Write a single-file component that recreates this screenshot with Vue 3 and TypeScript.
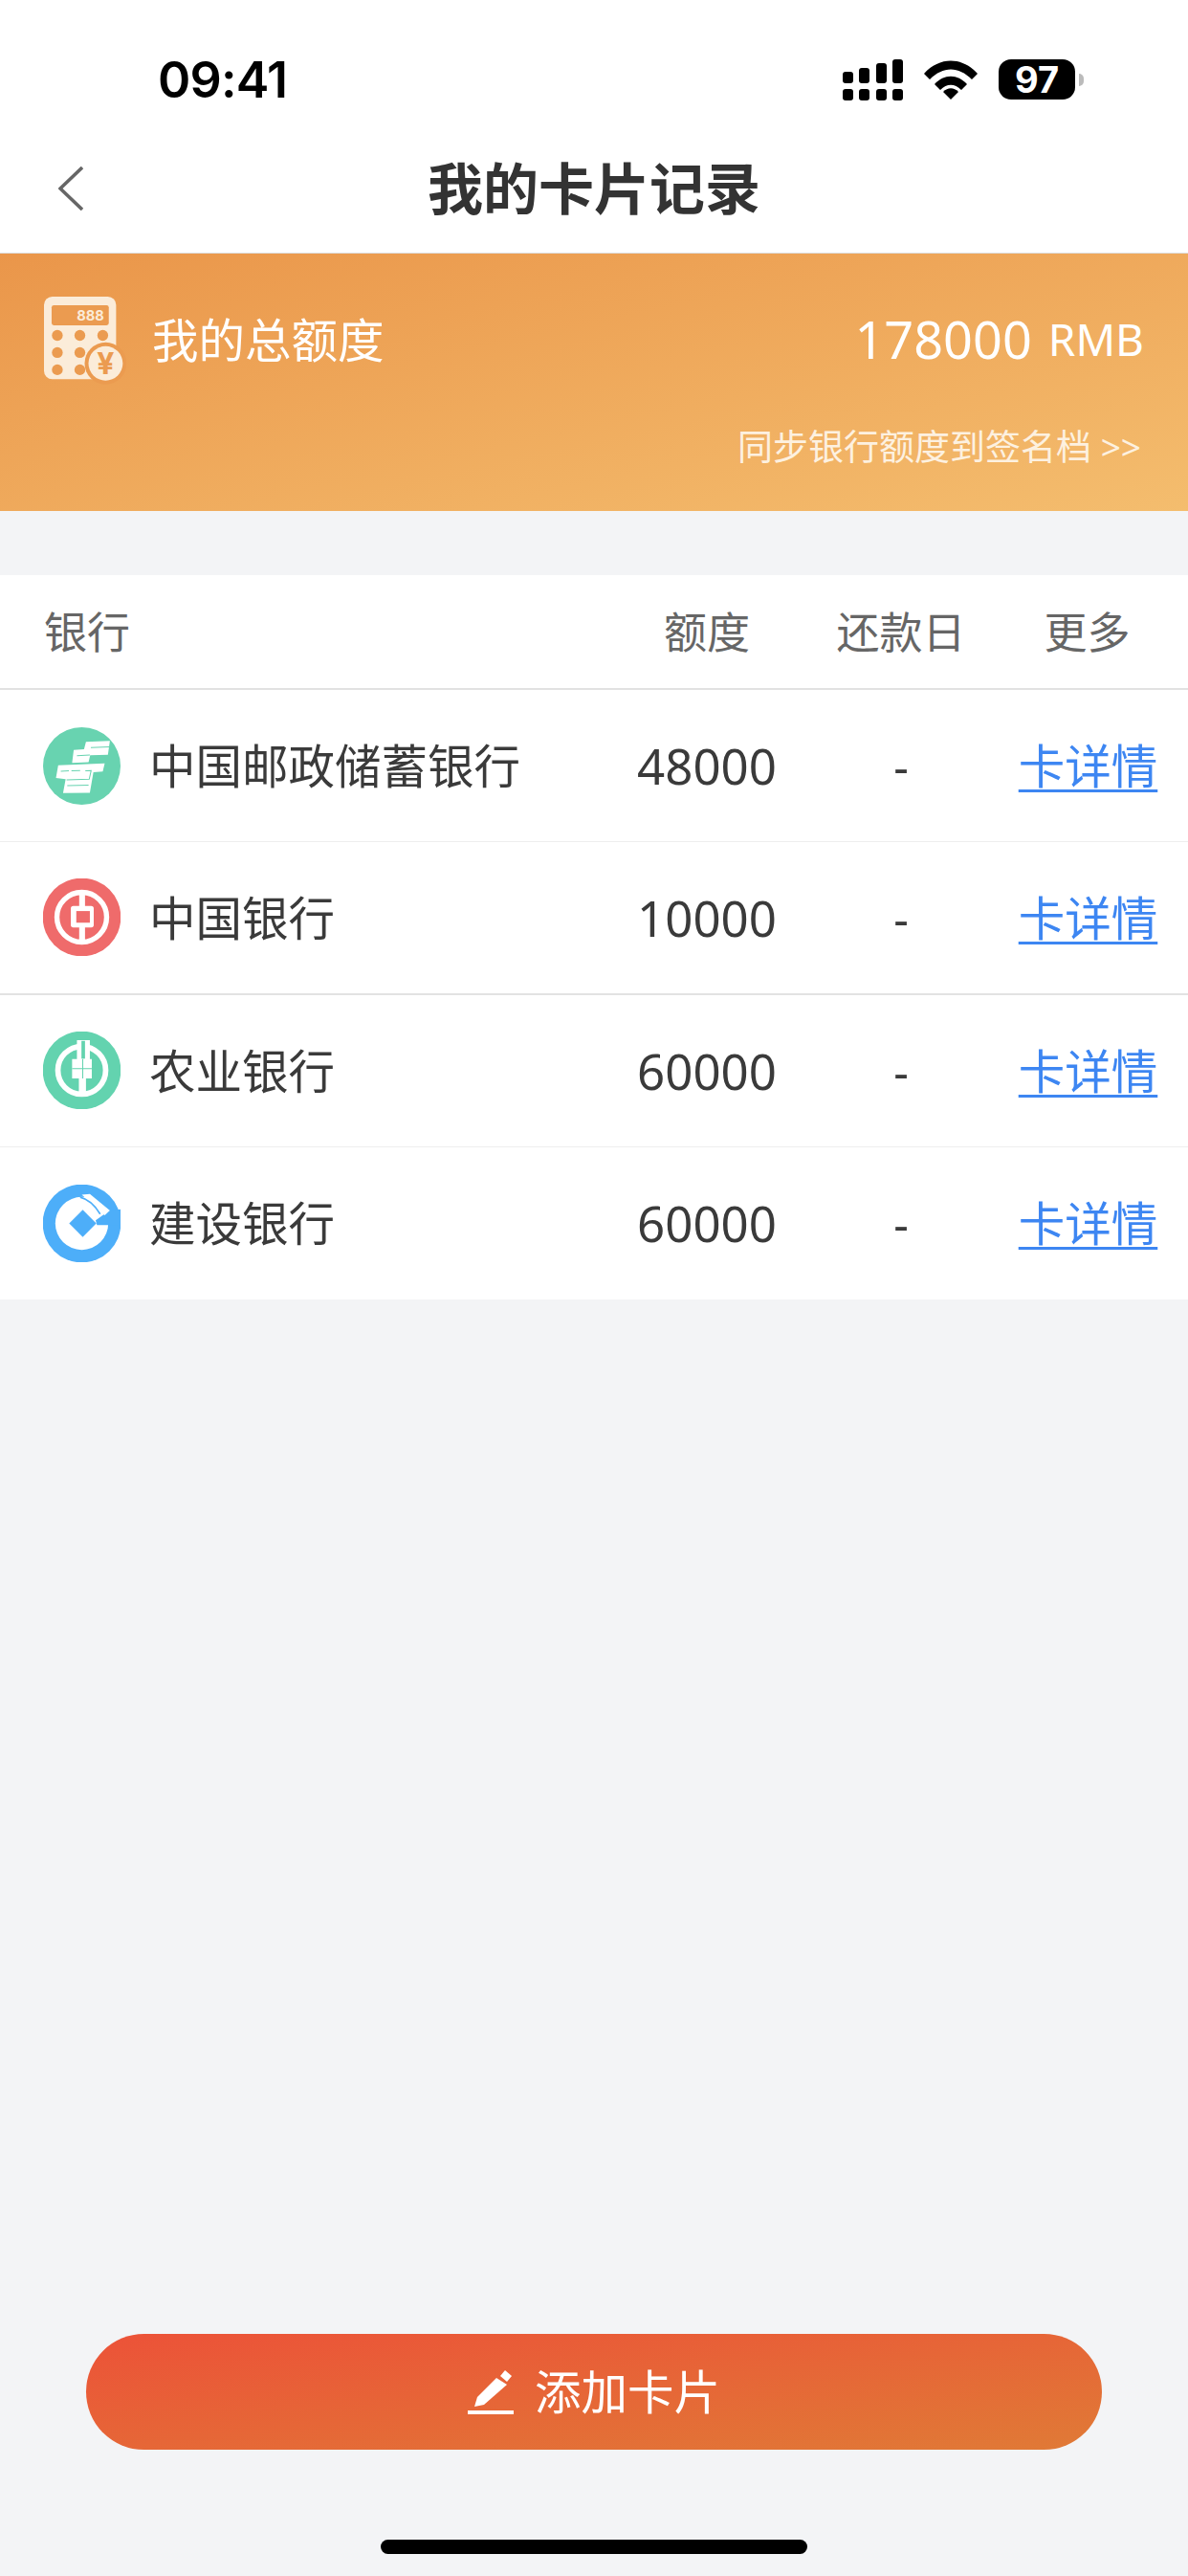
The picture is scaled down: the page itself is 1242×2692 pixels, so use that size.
<script setup lang="ts">
interface Card {
  name: string
  amount: string
  logo: "post" | "boc" | "abc" | "ccb"
}

const cards: Card[] = [
  { name: "中国邮政储蓄银行", amount: "48000", logo: "post" },
  { name: "中国银行", amount: "10000", logo: "boc" },
  { name: "农业银行", amount: "60000", logo: "abc" },
  { name: "建设银行", amount: "60000", logo: "ccb" },
]
</script>

<template>
  <div class="page">
    <div class="status">
      <span class="time">09:41</span>
      <div class="status-icons">
        <svg class="signal" width="63" height="43" viewBox="0 0 63 43" fill="#000">
          <rect x="0" y="13" width="11" height="12" rx="3" />
          <rect x="17" y="9" width="11" height="16" rx="3" />
          <rect x="35" y="4" width="11" height="21" rx="3" />
          <rect x="52" y="0" width="11" height="25" rx="3" />
          <rect x="0" y="31" width="11" height="12" rx="3" />
          <rect x="17" y="31" width="11" height="12" rx="3" />
          <rect x="35" y="31" width="11" height="12" rx="3" />
          <rect x="52" y="31" width="11" height="12" rx="3" />
        </svg>
        <svg class="wifi" width="56" height="41" viewBox="0 0 56 41" fill="#000">
          <path d="M0 14 C16 -4 40 -4 56 14 L50 20 C36 6 20 6 6 20 Z" />
          <path d="M11 25 C21 14 35 14 45 25 L39 31 C32 24 24 24 17 31 Z" />
          <path d="M20 33 C25 28 31 28 36 33 L28 41 Z" />
        </svg>
        <div class="battery"><span>97</span></div>
        <i class="battery-cap"></i>
      </div>
    </div>

    <div class="nav">
      <svg class="back" width="26" height="46" viewBox="0 0 26 46" fill="none" stroke="#666" stroke-width="3.6">
        <path d="M25 1 L2 23 L25 45" />
      </svg>
      <div class="title">我的卡片记录</div>
    </div>

    <div class="banner">
      <div class="total">
        <svg class="calc" width="87" height="93" viewBox="75 55 262 280">
          <rect x="78" y="58" width="227" height="260" rx="26" fill="#fbecd9" />
          <rect x="102" y="85" width="180" height="63" rx="7" fill="#eb9b50" />
          <text x="267" y="134" text-anchor="end" class="calc-num">888</text>
          <g fill="#eb9b50">
            <circle cx="120" cy="180" r="17" />
            <circle cx="191" cy="180" r="17" />
            <circle cx="263" cy="180" r="17" />
            <circle cx="120" cy="234" r="17" />
            <circle cx="191" cy="234" r="17" />
            <circle cx="120" cy="288" r="17" />
            <circle cx="191" cy="288" r="17" />
            <circle cx="272" cy="268" r="66" />
          </g>
          <circle cx="272" cy="268" r="54" fill="#fbecd9" />
          <text x="272" y="302" text-anchor="middle" class="calc-yen">¥</text>
        </svg>
        <span class="total-label">我的总额度</span>
        <span class="total-num">178000</span>
        <span class="total-unit">RMB</span>
      </div>
      <div class="sync">同步银行额度到签名档 &gt;&gt;</div>
    </div>

    <div class="list">
      <div class="row head">
        <span class="col-name">银行</span>
        <span class="col-amount">额度</span>
        <span class="col-due">还款日</span>
        <span class="col-more">更多</span>
      </div>
      <div v-for="card in cards" :key="card.name" class="row item" :class="card.logo">
        <div class="col-name">
          <svg class="logo" width="81" height="81" viewBox="45 45 240 240">
            <template v-if="card.logo === 'post'">
              <circle cx="165" cy="165" r="120" fill="#68d3b0" />
              <path d="M178 90 L252 87 L246 130 L191 132 L186 153 L135 155 L140 115 L172 113 Z" fill="#fff" />
              <path d="M92 163 L236 157 L230 182 L201 184 L190 248 L107 249 L115 206 L85 202 Z" fill="#fff" />
              <g stroke="#68d3b0" stroke-width="3" fill="none">
                <path d="M193 108 L250 106 M150 133 L190 131 M100 181 L125 180 M133 180 L160 179" />
                <path d="M176 180 L194 179 L188 206 L118 208 M120 226 L186 224" />
              </g>
            </template>
            <template v-else-if="card.logo === 'boc'">
              <circle cx="165" cy="165" r="121" fill="#ef6b6b" />
              <circle cx="165" cy="165" r="77" fill="none" stroke="#fff" stroke-width="16" />
              <rect x="157" y="85" width="18" height="160" fill="#fff" />
              <rect x="131" y="130" width="71" height="67" rx="8" fill="#fff" />
              <rect x="148" y="146" width="42" height="36" fill="#ef6b6b" />
            </template>
            <template v-else-if="card.logo === 'abc'">
              <circle cx="165" cy="165" r="121" fill="#63d3af" />
              <circle cx="165" cy="165" r="74" fill="none" stroke="#fff" stroke-width="17" />
              <path d="M150 72 H190 V130 H196 V190 H178 V240 H156 V190 H135 V130 H150 Z" fill="#fff" />
              <rect x="164" y="74" width="11" height="55" fill="#63d3af" />
              <path d="M135 160 H196 M168 130 V190" stroke="#63d3af" stroke-width="3" />
            </template>
            <template v-else>
              <circle cx="165" cy="165" r="121" fill="#4daef9" />
              <circle cx="165" cy="165" r="82" fill="#fff" />
              <path d="M208 155 L250 126 L292 120 V170 H212 Z" fill="#4daef9" />
              <path d="M165 76 L190 74 L252 125 L236 140 Z" fill="#fff" />
              <path d="M160 84 C185 90 205 108 222 136" fill="none" stroke="#4daef9" stroke-width="5" />
              <path d="M168 123 L210 165 L168 207 L126 165 Z" fill="#4daef9" />
            </template>
          </svg>
          <span>{{ card.name }}</span>
        </div>
        <span class="col-amount">{{ card.amount }}</span>
        <span class="col-due">-</span>
        <a class="col-more">卡详情</a>
      </div>
    </div>

    <div class="spacer"></div>

    <div class="add">
      <svg width="48" height="46" viewBox="0 0 48 46" fill="#fff">
        <path d="M7 38 L10 28 L30 8 L41 15 L17 36 Z" />
        <path d="M39 0 L46 6 L41 12 L34 6 Z" />
        <rect x="0" y="42" width="48" height="4" />
      </svg>
      <span>添加卡片</span>
    </div>
    <div class="home"></div>
  </div>
</template>

<style scoped>
.page {
  width: 1242px;
  height: 2692px;
  display: flex;
  flex-direction: column;
  overflow: hidden;
  background: #f3f4f6;
  color: #333;
  font-family: "Noto Sans", "Noto Sans CJK SC", sans-serif;
}

.status {
  height: 130px;
  box-sizing: border-box;
  padding: 62px 109px 0 165px;
  display: flex;
  justify-content: space-between;
  align-items: flex-start;
  background: #fff;
}

.time {
  font-family: Inter, sans-serif;
  font-size: 52px;
  font-weight: 600;
  line-height: 43px;
  letter-spacing: -0.8px;
  color: #000;
}

.status-icons {
  display: flex;
  align-items: flex-start;
}

.wifi {
  margin: 1px 0 0 22px;
}

.battery {
  margin-left: 22px;
  width: 80px;
  height: 42px;
  border-radius: 13px;
  background: #000;
  color: #fff;
  font-family: Inter, sans-serif;
  font-size: 38px;
  font-weight: 700;
  line-height: 42px;
  text-align: center;
}

.battery-cap {
  width: 5px;
  height: 13px;
  margin: 15px 0 0 4px;
  border-radius: 0 6px 6px 0;
  background: #bbb;
}

.nav {
  height: 135px;
  box-sizing: border-box;
  display: grid;
  grid-template-columns: 1fr auto 1fr;
  align-items: center;
  background: #fff;
  border-bottom: 1px solid #ddd;
}

.back {
  margin-left: 61px;
}

.title {
  font-size: 58px;
  font-weight: 700;
  color: #333;
  padding-bottom: 6px;
}

.banner {
  height: 269px;
  box-sizing: border-box;
  padding: 44px 46px 0 45px;
  background: linear-gradient(to bottom right, #ea964a 0%, #f4bd6e 100%);
  color: #fff;
}

.total {
  height: 93px;
  display: flex;
  align-items: center;
}

.total-label {
  margin-left: 27px;
  font-size: 48.5px;
  flex: 1;
  padding-bottom: 6px;
}

.total-num {
  font-size: 54px;
  padding-bottom: 3px;
}

.total-unit {
  margin-left: 17px;
  font-size: 46px;
  padding-bottom: 3px;
}

.calc-num {
  font-family: Inter, sans-serif;
  font-size: 44px;
  font-weight: 700;
  fill: #fbecd9;
}

.calc-yen {
  font-family: Inter, sans-serif;
  font-size: 96px;
  font-weight: 700;
  fill: #eb9b50;
}

.sync {
  margin-top: 40px;
  padding-right: 3px;
  text-align: right;
  font-size: 37px;
  line-height: 50px;
  color: #fdf1e0;
}

.list {
  margin-top: 67px;
  background: #fff;
}

.row {
  display: grid;
  grid-template-columns: 619px 240px 166px 217px;
  align-items: center;
  box-sizing: border-box;
  height: 159.25px;
  border-bottom: 1px solid #eee;
  text-align: center;
}

.row:last-child {
  border-bottom: none;
}

.row.boc {
  border-bottom: 2px solid #e2e2e2;
}

.head {
  height: 120px;
  font-size: 45px;
  color: #666;
  border-bottom: 2px solid #e2e2e2;
}

.head .col-name {
  padding-left: 46px;
  text-align: left;
}

.head span {
  padding-bottom: 4px;
}

.head .col-more {
  padding-left: 6px;
}

.item {
  font-size: 48.5px;
  color: #3a3a3a;
}

.item .col-name {
  padding-left: 45px;
  display: flex;
  align-items: center;
  gap: 30px;
  text-align: left;
}

.item .col-name span {
  padding-bottom: 4px;
}

.item .col-amount {
  font-size: 51px;
}

a.col-more {
  padding-left: 8px;
  padding-bottom: 4px;
  color: #3d86f2;
  text-decoration: underline;
  text-decoration-thickness: 3px;
  text-underline-offset: 6px;
}

.spacer {
  flex: 1;
}

.add {
  height: 121px;
  margin: 0 90px;
  border-radius: 61px;
  display: flex;
  justify-content: center;
  align-items: center;
  gap: 22px;
  background: linear-gradient(to bottom right, #ec5238 0%, #e07a36 100%);
  color: #fff;
  font-size: 48.5px;
}

.add span {
  padding-bottom: 6px;
}

.home {
  width: 446px;
  height: 15px;
  margin: 94px 0 23px 398px;
  border-radius: 8px;
  background: #000;
}
</style>

<style>
body {
  margin: 0;
}
</style>
